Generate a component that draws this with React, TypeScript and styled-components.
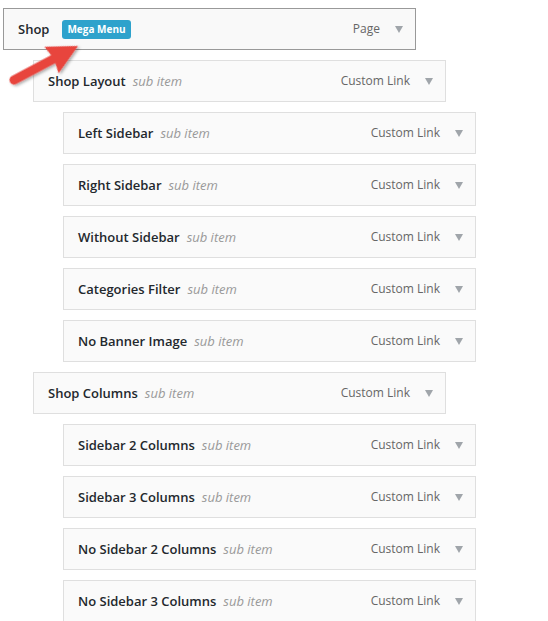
import React from "react";
import styled, { createGlobalStyle } from "styled-components";

const Global = createGlobalStyle`
  html, body { margin: 0; padding: 0; background: #ffffff; }
  body { font-family: "Open Sans", "Noto Sans", sans-serif; }
`;

const Page = styled.div`
  position: relative;
  padding: 8px 0 0 3px;
  width: 548px;
  height: 621px;
  box-sizing: border-box;
  overflow: hidden;
`;

const List = styled.div`
  display: flex;
  flex-direction: column;
  gap: 10px;
`;

const Handle = styled.div<{ $depth: number; $active?: boolean }>`
  box-sizing: border-box;
  width: 413px;
  height: 42px;
  margin-left: ${(p) => p.$depth * 30}px;
  display: flex;
  align-items: center;
  padding: 0 12px 0 14px;
  border: 1px solid ${(p) => (p.$active ? "#999999" : "#dfdfdf")};
  background: ${(p) => (p.$active ? "#f9f9f9" : "#fafafa")};
`;

const Title = styled.span`
  font-size: 13px;
  font-weight: 600;
  color: #23282d;
  line-height: 20px;
  white-space: nowrap;
`;

const Sub = styled.span`
  margin-left: 7px;
  font-size: 13px;
  font-style: italic;
  color: #999999;
  line-height: 20px;
  white-space: nowrap;
`;

const Badge = styled.span`
  margin-left: 13px;
  background: #2ea2cc;
  color: #ffffff;
  font-size: 10px;
  font-weight: 700;
  line-height: 19px;
  height: 19px;
  padding: 0 5px;
  border-radius: 3px;
  white-space: nowrap;
`;

const Controls = styled.div`
  margin-left: auto;
  display: flex;
  align-items: center;
  gap: 15px;
`;

const Type = styled.span`
  font-size: 12px;
  color: #666666;
  line-height: 20px;
  white-space: nowrap;
`;

const Toggle = styled.span`
  width: 0;
  height: 0;
  border-left: 4.5px solid transparent;
  border-right: 4.5px solid transparent;
  border-top: 7px solid #a0a5aa;
  margin-top: 1px;
`;

const Pointer = styled.svg`
  position: absolute;
  left: 0;
  top: 0;
  pointer-events: none;
`;

type Item = { title: string; depth: number; type: string; sub?: boolean; badge?: string; active?: boolean };

const items: Item[] = [
  { title: "Shop", depth: 0, type: "Page", badge: "Mega Menu", active: true },
  { title: "Shop Layout", depth: 1, type: "Custom Link", sub: true },
  { title: "Left Sidebar", depth: 2, type: "Custom Link", sub: true },
  { title: "Right Sidebar", depth: 2, type: "Custom Link", sub: true },
  { title: "Without Sidebar", depth: 2, type: "Custom Link", sub: true },
  { title: "Categories Filter", depth: 2, type: "Custom Link", sub: true },
  { title: "No Banner Image", depth: 2, type: "Custom Link", sub: true },
  { title: "Shop Columns", depth: 1, type: "Custom Link", sub: true },
  { title: "Sidebar 2 Columns", depth: 2, type: "Custom Link", sub: true },
  { title: "Sidebar 3 Columns", depth: 2, type: "Custom Link", sub: true },
  { title: "No Sidebar 2 Columns", depth: 2, type: "Custom Link", sub: true },
  { title: "No Sidebar 3 Columns", depth: 2, type: "Custom Link", sub: true },
];

export default function App() {
  return (
    <Page>
      <Global />
      <List>
        {items.map((it, i) => (
          <Handle key={i} $depth={it.depth} $active={it.active}>
            <Title>{it.title}</Title>
            {it.badge && <Badge>{it.badge}</Badge>}
            {it.sub && <Sub>sub item</Sub>}
            <Controls>
              <Type>{it.type}</Type>
              <Toggle />
            </Controls>
          </Handle>
        ))}
      </List>
      <Pointer width="100" height="100" viewBox="0 0 100 100">
        <defs>
          <filter id="sh" x="-20%" y="-20%" width="150%" height="150%">
            <feDropShadow dx="1" dy="2" stdDeviation="1.5" floodColor="#000" floodOpacity="0.35" />
          </filter>
        </defs>
        <g transform="translate(14,80) rotate(-28)" filter="url(#sh)">
          <path
            d="M0,-4.5 L44.5,-4.5 L42.5,-15 L72.5,0 L42.5,15 L44.5,4.5 L0,4.5 A4.5,4.5 0 0 1 0,-4.5 Z"
            fill="#e8453c"
          />
        </g>
      </Pointer>
    </Page>
  );
}
